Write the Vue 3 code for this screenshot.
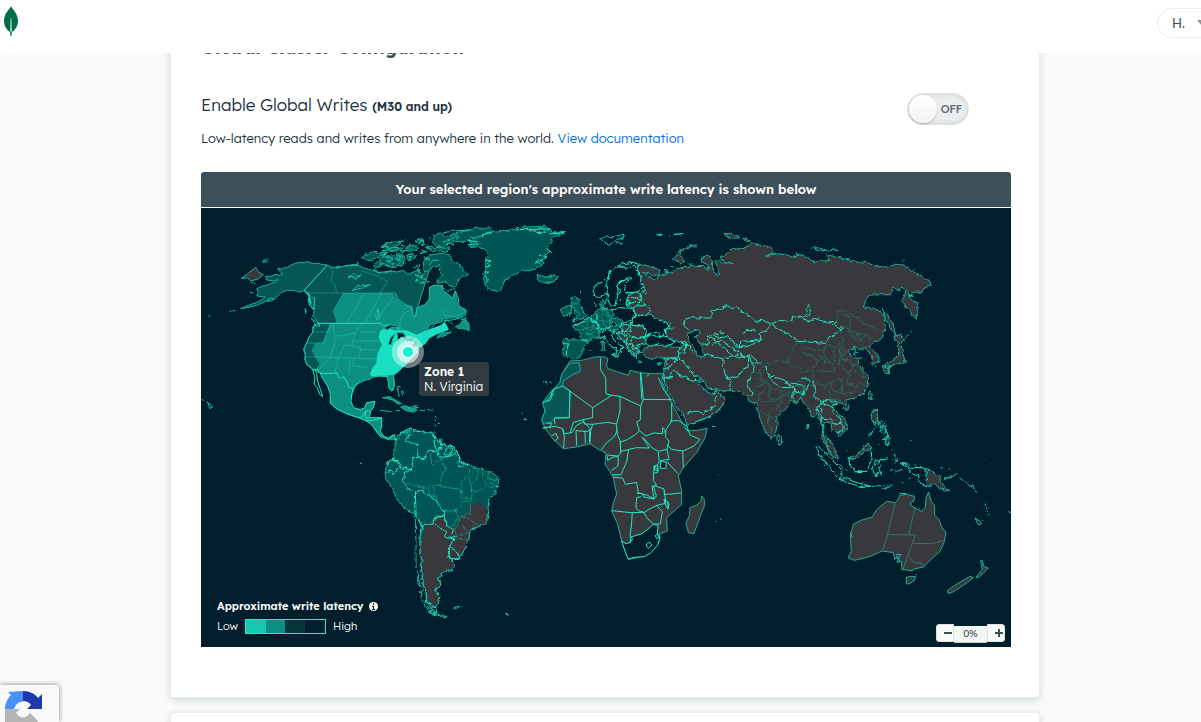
<script setup>
import { ref } from 'vue'

const globalWrites = ref(false)
const zoom = ref(0)
const latencySteps = ['near', 'mid', 'far', 'farthest']
</script>

<template>
  <div class="page">
    <header class="topbar">
      <a href="#" class="logo" aria-label="Home">
        <svg width="16" height="32" viewBox="0 0 16 32">
          <path d="M8 1C9 4 15 8 15 16C15 21 12 25 9 27L8.500 31H7.500L7 27C4 25 1 21 1 16C1 8 7 4 8 1Z" fill="#006c49" />
          <path d="M7.500 13H8.500L9 26L8 28L7 26Z" fill="#a5cbb9" />
        </svg>
      </a>
      <button class="account" type="button">H. <span class="caret"></span></button>
    </header>

    <main class="content">
      <section class="card">
        <h2 class="title">Global Cluster Configuration</h2>
        <div class="setting">
          <div>
            <h3 class="subtitle">Enable Global Writes <b>(M30 and up)</b></h3>
            <p class="lead">Low-latency reads and writes from anywhere in the world. <a href="#">View documentation</a></p>
          </div>
          <label class="switch">
            <input v-model="globalWrites" type="checkbox" aria-label="Enable Global Writes" />
            <span>{{ globalWrites ? 'ON' : 'OFF' }}</span>
          </label>
        </div>

        <div class="banner">Your selected region's approximate write latency is shown below</div>
        <div class="map">
          <svg class="world" viewBox="0 0 810 439" role="img" aria-label="World latency map">
            <defs>
              <filter id="coast" filterUnits="userSpaceOnUse" x="-500" y="-100" width="1700" height="1200">
                <feTurbulence type="fractalNoise" baseFrequency="0.07" numOctaves="2" seed="4" />
                <feDisplacementMap in="SourceGraphic" scale="13" xChannelSelector="R" yChannelSelector="G" />
              </filter>
            </defs>
            <!-- North America -->
            <g transform="translate(-1 13) scale(.33333)">
              <path class="t" d="M382 132 365 130 355 127 340 128 320 121 312 125 298 124 275 131 262 139 250 141 246 145 233 142 240 152 248 158 237 163 228 160 212 166 197 166 200 177 222 180 235 175 226 184 212 187 205 191 185 196 170 203 175 215 170 225 195 228 185 236 168 245 140 255 122 263 150 258 170 253 200 240 215 240 230 228 238 220 245 214 262 208 280 208 300 214 312 208 316 213 325 222 332 250 342 265 342 275 338 285 349 297 355 308 347 311 338 317 340 330 327 350 320 367 311 385 316 400 315 415 320 430 335 440 338 446 358 447 640 300 690 140 648 183 660 145 624 160 610 148 590 153 575 150 560 155 540 155 520 149 505 145 490 140 480 135 465 130 450 132 430 136 410 139 395 139Z" />
              <path class="mplain" d="M430 216 580 216 582 225 595 238 610 250 635 257 640 285 650 285 652 260 675 250 690 230 688 198 705 192 725 195 730 210 745 220 758 232 765 208 772 230 775 255 798 265 795 280 780 290 735 295 710 305 690 315 680 340 570 460 540 465 500 475 480 485 465 500 458 520 452 540 460 560 480 565 495 560 500 545 525 540 520 560 512 571 508 590 545 590 545 615 540 630 548 643 565 648 580 640 588 658 565 658 545 650 530 635 515 610 490 598 470 590 440 580 410 565 390 545 392 520 385 500 370 475 360 455 345 450 358 430 335 390 345 367 368 365 390 310 412 305 400 270Z" />
              <path class="b" d="M542 330 560 322 586 330 620 330 650 343 680 330 722 315 734 305 745 325 710 338 685 350 675 368 655 381 650 398 632 412 620 429 602 444 590 456 580 461 565 467 540 465 515 464 512 460 520 440 530 428 535 395 548 372 538 350Z" />
              <path class="m" d="M560 465 567 464 580 461 582 476 583 493 580 506 575 510 567 502 565 480Z" />
              <path class="n" d="M382 132 311 210M312 208 328 220 332 250M353 307 540 307 550 315 570 311 588 318 602 331M338 446 354 447 355 454 371 458 398 457 410 455 415 468 422 473 431 467 440 480 447 500 460 502M345 449 350 455 352 477 361 505 368 527 359 520 352 500 342 490 345 470 338 446M460 502 455 520 453 542 461 560 481 566 494 560 500 545 525 541 520 560 512 571 508 590 545 590 545 615 541 632 553 648 565 655 583 640 588 658M360 455 368 473 383 495 391 520 391 547 408 562 431 574 460 585 480 591 500 600 516 612 532 635 546 652M484 590 498 570 510 570M496 571 498 592 508 590M500 600 517 598 545 592M640 360 661 342 680 330 722 315 738 300M594 420 612 413 634 408" />
              <path class="o" d="M353 307 340 318 338 334 326 350 319 367 311 385 316 402 315 416 321 431 338 446M460 502 465 492 480 484 500 476 511 475 520 468 540 463 560 465 565 481 567 502 576 509 583 493 580 463 598 447 620 428 633 411 650 398 655 382 674 369 690 350 708 340 745 326M585 215 594 235 620 253 636 258 638 282 648 287 651 260 674 251 688 238 688 199 705 192 725 195 731 210 745 220 758 232 766 209 775 232 777 255 799 268 796 283 780 291 755 297 733 299 705 308 690 327 665 343" />
              <path class="f" d="M318 216H586M430 216 400 270 412 305M493 217 440 305M545 217 495 305M587 220 538 285 539 307M390 137 400 155 392 178 405 190 410 216M484 150 530 164 563 181 540 216M340 334 385 332 397 310M320 367 370 366 390 310M400 310 402 340 423 345M423 345 465 336 487 307M465 336 458 360 539 359M410 344 390 410 358 447M433 373 415 410 404 456M320 407 545 414M434 372 482 380 478 409M458 360 455 374M480 333 530 334M478 385 530 387M460 411 458 435 500 440M450 412 447 457M635 345 596 316 610 280 638 262M725 264 735 285 760 286 781 282 798 268M538 420 582 428M545 430 546 463M563 430 566 461M586 412 603 430M553 385 569 405M594 362 602 400M600 390 632 380" />
              <path class="w" d="M550 322 570 311 590 314 604 329 596 320 576 318 563 326ZM565 370 572 350 587 337 578 354 574 371ZM591 334 610 336 622 353 604 348 594 359ZM620 361 640 350 632 359ZM625 379 648 365 650 377Z" />
              <g filter="url(#coast)">
                <path class="t" d="M487 108 510 94 545 96 552 104 526 111 508 119 494 115ZM519 134 540 115 555 107 580 103 593 110 617 107 608 131 570 138 553 129 525 142ZM541 78 570 68 586 73 569 82ZM550 90 574 80 605 80 603 88 568 92Z" />
                <path class="o" d="M516 152 526 148 545 154 570 150 578 158M410 142 430 134 450 135 475 128 470 138M445 171 459 159 473 166 484 158 469 173 460 168ZM455 207 474 196 513 191 484 202 462 208ZM527 282 534 265 538 282 531 298ZM321 217 344 232 342 267 328 253ZM325 235 335 245 330 250ZM331 291 350 303 360 315 347 316ZM315 263 322 270 318 281ZM188 119 199 116 204 122 190 124ZM200 236 215 232 226 234M150 213 161 217M152 185 162 185 169 189" />
              </g>
              <path class="o" d="M88 273 94 270M98 270 107 268M25 284 31 286M6 535 11 539M20 542 31 550 37 559 29 562 24 547" />
              <path class="g" d="M123 173 140 161 167 139 174 152 190 161 176 173 153 180 143 170Z" />
              <path class="m" d="M547 530 570 527 590 540 603 547 595 550 576 536ZM602 558 616 554 630 560 651 567 641 574 618 569ZM588 568 600 570M682 565 692 568M590 498 594 510 598 528M604 511 608 524M540 568 575 572" />
            </g>
            <!-- Arctic islands and Greenland -->
            <g transform="translate(179 3) scale(.33333)" filter="url(#coast)">
              <path class="t" d="M130 150 150 132 190 127 210 136 220 151 239 160 247 175 265 188 248 201 237 199 232 214 220 229 199 215 169 213 187 192 175 177 180 161 158 167 148 181 133 180ZM105 207 120 198 149 211 138 216ZM0 140 20 135 42 140 50 148 60 145 61 155 49 166 30 166 12 158 0 160ZM77 134 91 128 108 132 103 144 86 149ZM49 128 67 127 65 146 53 151ZM159 92 164 71 185 65 192 78 237 64 285 52 332 51 339 59 319 68 290 78 263 82 255 91 222 92 188 108 174 107ZM137 109 165 109 207 112 200 122 154 119ZM10 101 36 92 74 90 55 102 30 109ZM75 112 101 102 115 110 108 119ZM106 89 127 82 132 91 113 96Z" />
              <path class="t" d="M260 91 286 83 315 73 330 65 350 60 383 58 415 49 459 47 493 46 512 55 516 66 538 63 556 65 530 74 514 86 517 94 503 104 506 114 510 124 493 132 499 140 483 147 493 155 474 168 452 178 424 180 406 190 391 200 376 204 367 223 351 244 337 237 322 235 313 217 309 187 318 172 316 148 324 135 316 114 280 106 265 105 276 94Z" />
              <path class="n" d="M405 56 510 54M451 59 499 64M259 91 294 89M263 103 298 97M334 65 303 71M479 132 495 137 482 153 462 157 479 144M315 145 332 149 321 157 333 165 315 169M309 183 326 183 314 194 326 207 315 217M506 69 552 66M500 114 516 123" />
              <path class="o" d="M0 110 14 104 28 108M4 118 23 121M43 109 62 113M63 107 72 105M89 98 98 103M115 86 130 89M123 103 135 96M145 78 151 85M188 94 235 71M189 66 225 60 271 57M209 85 238 80M198 101 225 98M25 139 39 145 20 151 43 158M80 139 94 136 88 146M70 150 76 159M0 125 20 128 7 134M52 135 62 134 58 145M105 190 118 190 125 204M121 212 133 218M186 225 203 239 226 233M100 170 118 160 112 180 130 190 108 196M130 140 150 145 140 155M62 122 80 118 95 121M20 112 38 118 50 116M120 128 140 122 128 118M145 165 160 150 175 146 190 150" />
              <path class="t" d="M473 193 485 196 489 202 506 196 526 193 533 202 520 212 498 217 485 209 473 205Z" />
              <path class="m" d="M226 347 244 339 248 321 258 320 256 333 266 336 268 355 246 354ZM169 382 179 370 214 359 203 371 184 376ZM195 324 220 340 209 331Z" />
              <path class="o" d="M491 511 498 513 504 517M511 513 513 515M112 585 100 590M51 525 62 529M53 535 60 541M68 540 72 548" />
            </g>
            <!-- South America -->
            <g transform="translate(159 193) scale(.33333)" filter="url(#coast)">
              <path class="t" d="M105 120 118 111 124 97 142 90 150 80 157 91 174 90 191 93 211 98 223 95 226 111 239 117 246 129 276 135 291 150 299 168 305 188 326 189 345 201 368 205 388 211 410 225 416 243 409 268 396 288 386 292 387 334 377 367 350 379 329 394 326 420 311 451 295 475 272 475 281 493 272 509 248 512 246 527 233 529 240 551 226 570 240 585 233 613 214 619 200 607 186 593 188 565 176 535 178 516 169 498 168 420 165 338 143 327 120 308 104 279 83 240 75 221 80 190 98 170 105 145Z" />
              <path class="gplain" d="M190 372 222 370 225 350 240 343 253 348 259 369 286 384 302 346 327 338 328 315 350 303 381 319 385 345 373 370 350 379 329 394 326 420 311 451 295 475 272 475 281 493 272 509 248 512 246 527 233 529 240 551 226 570 240 585 233 613 214 619 200 600 187 550 185 480 179 430 190 400Z" />
              <path class="w plain" d="M170 345 183 380 178 420 180 478 187 550 198 600 186 590 188 565 178 535 170 498Z" />
              <path class="o" d="M386 292 387 334 377 367 350 379 329 394 326 420 311 451 295 475 272 475 281 493 272 509 248 512 246 527 233 529 240 551 226 570 240 585 233 613 214 619" />
              <path class="n" d="M103 119 123 96 150 80 172 91 217 94 229 112 246 131 276 136 292 153 304 186 313 186 324 191M138 94 143 105 138 120 176 132 173 165 180 174 196 171 204 147 230 150M224 99 224 136 242 169 266 166 290 162M242 113 246 140 234 147 233 164M267 137 255 147 251 160 270 163 277 149 271 139M289 151 278 164M95 172 117 184 122 202 154 202 159 181 158 169 174 170M78 190 92 176 115 184M78 216 93 210 99 221 118 199 128 204 157 202 133 220 130 242 144 263 166 271 168 336 184 376 190 371 222 369M166 276 188 264 201 281 229 298 243 322 255 327 252 347 229 345 222 367 240 381 256 391 258 411 281 412 289 402M189 371 180 408 180 460 187 478 184 502 190 555 200 584 200 603 228 620 237 641 208 636M253 348 259 371 280 384 275 401M271 411 285 416 266 438 266 463 271 475M269 438 292 453 299 469M268 439 268 461 272 474 297 473" />
              <path class="f" d="M128 244 204 263 210 250 243 255 302 266 302 291 335 292 331 300 302 303M211 155 215 189 235 183 239 174M241 170 257 200 243 230 245 256M204 264 210 282 230 285 232 300M219 257 222 287M253 331 291 328M288 330 296 346 277 378M302 303 302 317 286 328M318 225 306 248 302 288M331 205 325 223 335 265 332 293M330 228 356 207M356 209 350 233 333 252M369 210 366 232 385 257 415 257M386 212 383 235 405 236M330 271 356 270 382 256M390 231 412 239M389 244 407 253M333 307 330 337 303 347 334 354 341 366 365 376M306 375 323 397 291 402M281 410 325 416M303 347 283 386 290 405" />
              <path class="o" d="M173 510 174 545 183 552M173 538 184 545M178 535 187 534M177 575 186 572 182 589M185 598 195 615 210 631M200 615 216 626 210 632 228 636 221 641 245 645 262 646 240 649M205 628 233 628M237 537 243 544M281 621 289 617 301 618 291 622ZM435 639 446 643M486 36 488 38M490 54 500 56M0 187 9 187M214 28 217 30M219 36 222 40M226 45 228 51M225 56 229 62M225 70 228 76M219 80 221 82M233 70 239 70M108 29 119 28M179 28 195 28M144 21 157 17 174 22 155 28ZM110 0 133 13M139 92 148 90 151 105 142 106ZM290 188 300 181 314 186 307 199 294 195" />
            </g>
            <!-- Russia and Asia -->
            <g transform="translate(459 13) scale(.33333)" filter="url(#coast)">
              <path class="g" d="M-60 130-41 134-17 141 0 150-5 163-28 160-50 154-32 169-22 172-14 182-5 165 13 160 20 158 43 149 62 140 90 139 87 128 104 136 129 137 149 146 142 130 126 123 130 103 148 109 158 121 158 141 164 158 179 160 176 140 164 121 178 116 184 126 219 127 189 119 180 108 200 99 210 86 237 83 265 75 275 65 300 73 326 76 345 95 320 103 355 98 406 107 409 99 440 105 453 118 470 122 511 118 500 101 530 108 560 115 600 125 618 121 645 137 680 137 710 130 745 139 775 160 800 178 818 193 795 200 787 213 760 214 744 215 755 234 771 245 775 267 768 295 747 269 725 242 735 222 737 207 723 196 715 210 702 198 694 203 693 221 625 222 610 258 640 262 655 268 672 286 676 320 665 355 645 360 630 375 640 390 658 405 655 425 640 430 634 405 614 379 597 386 588 395 585 380 570 388 571 405 605 411 590 421 608 444 625 465 626 490 611 516 590 530 560 540 555 550 535 544 519 558 536 580 554 594 562 618 550 636 536 650 530 633 515 628 514 610 499 606 489 611 491 640 508 655 521 673 528 710 510 700 499 675 485 650 489 625 480 600 473 577 455 588 445 562 429 544 423 528 412 546 395 540 380 560 350 590 353 621 345 645 333 655 310 620 295 575 290 543 275 548 265 530 245 512 215 508 180 510 161 503 144 502 129 478 111 465 104 473 125 495 137 510 160 522 168 505 174 519 195 530 190 550 168 575 140 590 80 613 75 590 45 550 15 490 9 464 15 440 12 410 0 410-33 413-52 398-50 382-19 373 20 373 60 380 80 372 60 364 30 355 19 346 22 331 28 308 6 303-24 295-35 280-35 255-63 245-61 220-46 210-50 190-64 165-72 146Z" />
              <path class="w" d="M90 331 115 327 118 337 105 352 111 360 122 364 123 380 131 391 134 407 123 411 108 404 104 381 88 359 81 342ZM583 375 597 385 593 397 580 400 587 389Z" />
              <path class="n" d="M70 305 76 295 96 286 112 291 154 291 153 267 180 264 203 254 215 263 231 257 239 268 268 285 285 301 307 298 334 307 361 298 395 302 398 284 429 291 443 300 473 294 500 303 531 302 520 311 550 322 518 343 497 367 457 364 414 361 382 338 350 321 334 308 317 331 300 335 303 357 250 360 235 374 202 347 178 351 155 343 142 345 145 370 125 369M70 305 74 317 86 326M250 339 258 329 286 327M158 345 165 336 176 342M143 343 192 379 219 404 237 401M157 370 182 359 230 391M225 375 261 378 302 359M237 382 233 392 252 407 270 401 293 421M129 404 143 398 188 414 190 442 198 467 213 478 207 508M188 414 219 404 236 410 266 406 279 426 303 425M197 472 233 468 250 447 264 437 267 406M276 427 282 449 271 470 261 495 277 518 266 524M77 380 71 395 54 397M60 379 55 408 68 423 99 457 108 469M62 364 75 361 101 397M12 412 45 410 52 408M9 447 23 440 20 415M22 415 52 412 27 440 19 448M36 445 67 466 101 478M13 470 37 466 21 476 35 453M82 576 113 570 128 579 146 567 163 554 167 526M100 478 129 481M163 529 171 526M330 470 339 463 387 488 394 500 364 499 336 482ZM304 439 319 433 320 450 330 469M394 489 402 487 433 494 430 518 405 513 395 490 M402 499 398 530 409 542M423 528 437 511 448 486 457 480 468 510 461 524 487 546 469 560 484 583 484 604 494 624M487 539 492 548 524 562 517 573 543 594 542 607 531 611 520 607 517 595 487 591 487 575 476 556M509 536 521 551 530 549M541 605 549 614 549 627 531 636M487 546 509 533 531 544M72 367 88 374 91 386M420 472 438 472 450 479" />
              <path class="o" d="M430 288 442 274 445 250 453 265 448 283 437 287M180 332 188 332 187 338 181 337ZM84 612 109 602 144 590 171 573 191 548M157 516 164 518 160 524" />
              <path class="f2" d="M528 302 535 290 528 275 545 268 570 280 600 295 610 307 639 318 646 332M546 278 575 290 569 312 573 330 593 340 621 342 634 360M545 323 565 322 569 341 595 360 614 350M593 340 598 352 610 362M404 362 426 369 427 378 474 389 495 380 500 370 523 380 551 363 541 331M383 421 386 405 400 390 400 376 416 363M383 421 348 419 319 432M383 420 397 437 413 437 428 453 449 447 465 435 474 420 461 404 426 397M458 447 456 461 465 483 496 500 514 484 534 474M475 448 501 452 522 449 525 436 492 421 475 398M492 380 492 405 510 425M521 384 523 424 512 432M540 379 543 401 534 436M549 370 549 399 544 415 570 417M564 391 549 405M568 417 578 431 594 430M543 435 566 459 584 430M594 430 613 463M584 450 611 472 620 465M566 459 562 486 585 499 600 486 618 495M510 484 518 509 542 515 547 488 536 468M549 490 579 488M500 500 512 515 510 535 543 541M542 515 568 517 589 505M300 445 303 471 318 491M280 450 303 454M289 469 318 481 300 495 270 509M318 482 335 502 362 511 390 507M325 500 299 517 295 542M332 494 326 529 347 538 390 512M303 542 346 540 365 517 362 550 342 566 327 575 321 607M300 572 325 586 350 590M325 586 326 610 337 624 333 651M350 550 360 570M375 519 390 529 400 512M406 480 425 481M413 500 437 492 422 519M612 382 636 374M633 404 652 406" />
              <path class="g" d="M40 113 55 92 76 79 108 71 106 78 79 83 66 91 59 107 78 121 62 126 44 118ZM195 38 215 37 240 50 230 52 198 47ZM249 51 271 60 257 62ZM458 81 474 80 501 88 475 90ZM503 88 532 88ZM350 650 355 640 365 653 364 668 354 671ZM556 553 566 552 565 563 556 568 549 562ZM625 519 631 507 637 519 633 536 626 531ZM666 265 682 279 696 301 713 346 693 324 677 291ZM702 346 717 343 736 352 720 368 706 361ZM716 370 728 379 730 403 736 425 703 429 683 443 672 438 680 426 697 416 716 405 715 390ZM667 437 687 434 685 459 674 455ZM682 440 696 437 689 445ZM637 573 648 565 653 575 649 594 657 604 675 614 672 622 650 607 637 592Z" />
              <path class="o" d="M0 41 8 41M28 43 34 44M42 40 70 37M12 145 23 146 23 155 13 153M33 135 43 138M727 120 731 121M739 346 745 341M751 334 756 332M750 223 760 227M645 438 649 440M441 610 447 611 445 622 441 622ZM157 616 164 617M751 658 753 659" />
            </g>
            <!-- Europe -->
            <g transform="translate(319 13) scale(.33333)" filter="url(#coast)">
              <path class="w o2" d="M355 130 342 124 315 127 291 136 273 149 267 165 252 181 237 188 219 197 221 224 237 231 260 218 264 237 271 253 283 252 288 241 294 224 302 211 291 197 301 184 322 171 333 172 316 187 314 209 328 216 359 211 372 197 362 182 363 164 350 148ZM335 295 318 306 302 301 279 290 275 268 300 260 338 262 342 279ZM340 290 352 284 385 279 400 287 419 298 446 306 445 318 430 328 438 337 421 348 412 338 398 334 378 349 374 336 355 320 340 313 332 311ZM230 338 248 334 259 326 283 331 273 341 282 358 297 370 313 382 302 383 301 395 292 402 276 403 291 393 285 381 266 369 255 349 239 349ZM378 349 385 342 400 343 413 348 430 344 450 353 466 366 440 374 414 369 391 376 379 370Z" />
              <path class="g" d="M303 308 329 313 345 314 370 315 379 328 375 350 376 370 360 376 352 385 358 398 348 400 351 412 334 397 320 381 318 363 300 348 288 333 300 331 311 333ZM323 220 350 216 361 219 363 240 380 254 390 270 383 280 350 284 340 262 318 251 332 245 321 236Z" />
              <path class="t" d="M130 355 156 357 184 357 203 364 190 378 187 395 177 412 156 414 145 409 130 406 128 382 132 373ZM158 312 174 313 180 305 200 301 206 291 230 303 237 312 232 326 238 344 220 355 204 357 185 355 179 332 159 319ZM229 272 250 263 279 267 282 284 267 296 276 310 265 320 241 320 230 308ZM152 232 163 226 178 235 176 249 187 263 201 282 193 292 170 297 158 300 173 284 159 276 166 261 151 249ZM124 265 140 255 156 256 153 275 138 287 126 282ZM238 246 250 235 258 244 251 258 264 264 245 266ZM51 164 65 165 83 170 103 161 113 171 101 181 78 186 65 182 53 173ZM217 281 228 272 233 285 231 301 211 292ZM269 297 293 290 306 300 297 309 278 306ZM267 319 297 312 299 323 276 331Z" />
              <path class="n" d="M293 224 289 193 304 180 326 173M288 136 322 142 344 132 355 155 363 169M273 149 258 193 263 217 261 240M129 367 145 369 146 380 140 385 139 405M159 312 177 309 206 291 226 305 238 312M187 355 206 362M210 291 214 302 231 305M230 321 258 324 269 319M235 331 246 323 250 332M303 308 329 313 334 329 311 333 300 322ZM315 333 331 313 370 315 379 328 375 350 345 352 323 339M334 347 361 352 378 352M335 352 330 370 346 374 373 366M288 333 304 337 325 350 313 365 291 348M318 352 326 371 320 381 334 397 351 412M341 374 338 385 356 382 352 398M321 214 350 216M320 232 330 227 361 235M318 249 344 244 360 248M321 236 332 247 322 257M340 260 349 255 380 254M338 262 350 284 383 280M323 220 318 251M361 219 358 247M320 379 318 363 307 357M305 331 315 338M442 322 460 321M480 365 503 373 488 389M495 378 503 363" />
              <path class="f" d="M205 300 197 327 211 353M185 314 211 328 234 321M183 326 220 316 237 327M194 333 223 343 211 353M221 305 215 330M249 267 247 304 263 320M235 283 275 285M231 298 266 300M257 268 270 290M184 336 207 341 225 333M150 243 174 248 157 251M166 263 180 283" />
              <path class="o" d="M241 53 253 49 277 47 302 43 316 45 296 55 284 61 267 73 252 64ZM285 65 306 67M409 42 427 40M449 43 453 46M461 41 490 38M180 211 183 213M240 259 252 259 244 249M223 244 227 258M246 364 252 364 253 390 247 391ZM252 345 249 353 256 355M274 402 295 403 293 411ZM204 387 213 388M351 423 370 425M412 427 424 424 418 430ZM298 237 303 240 300 243M370 209 378 207 382 212 373 216ZM328 387 350 401 342 410 333 395M345 391 365 391M345 382 359 376" />
            </g>
            <!-- Africa -->
            <g transform="translate(319 133) scale(.33333)">
              <path class="g" d="M150 60 185 58 225 48 250 47 264 53 260 71 262 82 290 92 325 103 330 88 360 95 390 98 430 98 425 119 440 155 455 185 470 215 490 250 502 270 530 268 562 262 555 290 530 335 490 380 475 405 485 450 485 490 440 530 442 570 420 578 418 602 400 625 375 645 325 655 315 630 305 600 293 550 275 510 280 485 290 460 280 410 275 400 255 370 258 335 235 325 210 308 170 318 130 323 100 295 75 262 65 235 75 210 68 185 95 150 120 125 125 100Z" />
              <path class="t" d="M150 67 178 65 182 90 155 103 130 120 128 135 150 150 148 230 105 232 90 246 68 246 66 232 76 211 68 185 84 163 120 124 125 100Z" />
              <path class="w o2" d="M305 600 318 608 330 605 333 588 366 578 381 567 400 550 414 553 412 580 420 590 413 612 393 635 373 647 342 649 325 655 315 630ZM422 361 439 364 438 382 421 382Z" />
              <path class="n" d="M128 135 218 200 275 163 258 158 257 110 241 85 242 50M128 135 100 145 100 155 90 178 68 184M150 149 148 230 104 231M218 200 218 230 190 236 160 244 150 276M300 165 300 210 290 249 262 244 218 250 212 270 210 308M275 163 300 166 362 195 370 175 363 95M368 175 455 176M362 195 361 237 350 243 358 269 346 281 322 296 302 303 292 280 289 250M358 269 378 285 400 276 427 278 428 260 438 270 436 287 447 300 441 325 415 331 397 321 370 290M455 185 455 240 432 275M450 240 477 239 501 256 510 282 540 295 522 315 490 330 455 325 441 311M441 325 447 355 418 359 414 371 402 376 400 419 410 432 396 436 402 474 383 463 355 456 350 424 316 430 308 411 279 409M275 402 303 401 320 362 326 325 350 320 388 321 366 288M301 303 302 338 294 345 261 342M261 343 263 358 280 348 295 347 294 375 274 389M326 326 302 331 301 301M440 361 474 398M488 329 490 380M401 433 432 444 433 461 483 456M350 458 367 457 371 468 402 474 409 465 400 435M433 447 437 487 411 493 389 504 373 514 355 509 348 501 350 470 363 467M276 509 333 515 372 514 380 530 400 549 421 549 427 512 409 493M337 515 334 555 330 587 338 593 330 606M439 478 447 489 444 505M97 148 93 165 80 180M81 247 94 246 91 259 70 259M68 262 103 256 127 262 133 286 131 321M105 250 103 233M128 262 132 278 156 275 170 253 190 242 211 263 203 272 168 269 170 314M195 269 196 307M209 266 208 303M95 285 108 277 114 292 104 300M190 235 193 249 219 250M292 266 284 286 259 306 244 326M400 375 414 385 413 395 401 396M415 333 417 356M361 95 365 174M380 106 387 101M415 110 432 148 453 175M432 100 433 122M496 260 503 269" />
              <path class="o2" d="M378 612 388 603 396 612 385 622ZM406 584 413 579 418 589 410 593ZM405 373 414 375 414 389 403 386ZM432 474 443 482 444 503 435 488Z" />
              <path class="g" d="M545 465 553 475 553 495 543 520 532 550 522 578 505 575 498 545 509 524 510 500 531 492 543 481Z" />
              <path class="o" d="M69 122 73 123M78 125 82 126M90 121 93 125M5 216 8 217M12 236 19 236M576 256 584 257M594 401 596 402M586 541 589 542M600 533 604 535M249 331 255 334" />
            </g>
            <!-- Oceania -->
            <g transform="translate(579 173) scale(.33333)">
              <path class="g" d="M345 365 355 355 359 343 379 340 404 346 402 360 391 365 394 374 415 387 426 391 436 378 438 350 446 333 454 362 464 374 464 402 477 416 485 438 498 455 492 485 480 511 460 529 430 558 402 564 397 570 366 565 364 541 351 544 359 526 344 535 340 515 307 510 280 522 254 531 223 538 204 530 214 511 211 463 220 430 243 418 277 408 290 386 320 361ZM379 588 407 586 403 599 387 609 379 608ZM502 629 524 613 570 586 580 590 563 604 519 633 505 638ZM588 589 607 565 602 539 606 537 612 557 625 561 611 576 594 590Z" />
              <path class="f" d="M345 367 323 461 308 508M323 461 406 462 369 565M405 379 387 460M400 487 455 488 490 480M388 529 403 545 426 548 431 557" />
              <g filter="url(#coast)">
                <path class="w o2" d="M105 197 115 195 134 214 151 230 160 241 181 262 187 283 177 293 164 281 151 260 130 234ZM207 231 219 235 238 222 253 203 264 189 273 208 276 235 268 249 262 271 225 272 209 252ZM176 294 202 294 231 305 273 316 239 316 204 306ZM361 247 382 252 389 263 409 259 438 262 440 318 417 305 416 281 393 276 379 257Z" />
                <path class="g" d="M132 163 147 181 161 197 175 234 156 223 140 190ZM207 232 237 215 250 204 263 184 278 203 257 206 240 226 222 235ZM439 264 460 273 477 284 483 302 506 330 480 324 463 307 440 319ZM277 88 291 85 294 106 284 134 277 120ZM312 172 325 165 330 180 322 192 314 184Z" />
                <path class="o" d="M294 124 308 123 319 132 315 148 322 150 323 165 330 180 325 192 314 184 322 172 306 176M298 138 312 139 299 151 311 159M281 127 290 139M295 129 308 153M320 144 313 161M267 167 279 148M286 240 303 237 321 234 297 242 290 248 307 253 295 261 306 284 294 270 287 288 280 258 287 235M343 221 350 238 344 248M341 236 350 241M331 270 344 268M346 270 367 269M360 246 389 250 376 257M286 315 313 314M306 326 325 316 338 313M312 324 331 320M178 250 185 256 180 265M492 291 515 291 528 277 516 285 499 294Z" />
              </g>
              <path class="o" d="M281 141 284 145M365 303 370 307M386 295 392 290M275 316 284 316M113 219 117 225M122 233 126 238M132 251 135 255M187 266 190 269M197 266 202 268M199 208 202 210M295 189 297 192M335 205 338 208M481 260 488 261M506 263 510 264M539 290 551 300M556 301 561 306M562 309 574 318 578 311 583 325M584 330 591 333M615 368 618 375M619 379 622 384M620 389 623 393M624 400 628 402M585 411 600 421 604 429 595 431ZM607 417 609 420M685 392 693 395M390 178 392 179M631 246 632 247M407 579 410 582M416 381 419 383M348 521 366 521M349 526 359 540M358 337 379 338M211 454 217 469M129 134 129 166M82 130 85 142M404 250 409 256" />
            </g>
          </svg>

          <span class="marker"></span>
          <div class="tip"><b>Zone 1</b><span>N. Virginia</span></div>
          <div class="legend">
            <div class="legend-title">Approximate write latency
              <svg width="9" height="9" viewBox="0 0 9 9"><circle cx="4.500" cy="4.500" r="4.500" fill="#fff" /><path d="M4 1H5V3H4ZM3 4H5V7H6V8H3V7H4V5H3Z" fill="#001e2b" /></svg>
            </div>
            <div class="scale">Low <span class="steps"><i v-for="s in latencySteps" :key="s" :class="s"></i></span> High</div>
          </div>
          <div class="zoom">
            <button type="button" aria-label="Zoom out" @click="zoom = Math.max(0, zoom - 10)"><svg width="8" height="8" viewBox="0 0 8 8"><path d="M0 4H8" /></svg></button>
            <output>{{ zoom }}%</output>
            <button type="button" aria-label="Zoom in" @click="zoom += 10"><svg width="8" height="8" viewBox="0 0 8 8"><path d="M0 4H8M4 0V8" /></svg></button>
          </div>
        </div>
      </section>
      <section class="card next"></section>
    </main>

    <aside class="captcha" aria-label="reCAPTCHA">
      <svg width="40" height="40" viewBox="0 0 40 40">
        <path d="M19 2V13C15 12 12 15 10 20H1C1 14 4 9 7 6L4 3Z" fill="#4a90f5" />
        <path d="M19 2C26 2 31 5 34 9L38 5V20H23L27 16C25 13 22 12 19 12Z" fill="#1c3aa9" />
        <path d="M1 20H16L12 24C16 30 22 30 26 24L34 32C25 42 10 39 6 34L1 38Z" fill="#b5b5b5" />
      </svg>
    </aside>
  </div>
</template>

<style>
body { background: #f9fbfa; }
</style>

<style scoped>
.page { height: 100vh; overflow: hidden; font: 300 13px/20px Lexend, "Lato", sans-serif; color: #21313c; }
.page * { box-sizing: border-box; }
.topbar { position: fixed; z-index: 5; top: 0; left: 0; right: 0; height: 53px; background: #fff; display: flex; justify-content: space-between; align-items: flex-start; }
.logo { margin: 5px 0 0 3px; display: block; }
.logo svg { display: block; }
.account { margin: 8px -16px 0 0; width: 60px; height: 30px; border: 1px solid #e7eeec; border-radius: 15px; background: #fff; color: #3d4f58; font: 13px "Lato", sans-serif; padding: 0 0 0 14px; display: flex; align-items: center; gap: 12px; }
.caret { border: 5px solid transparent; border-top: 6px solid #89979b; border-bottom: 0; }
.content { padding: 0 162px 0 171px; display: flex; flex-direction: column; gap: 16px; }
.card { flex: none; background: #fff; border-radius: 3px; padding: 36px 28px 50px 30px; box-shadow: 0 0 1px 1px #e7eeec, 0 2px 8px rgba(6, 22, 33, .2); }
.title { margin: 0 0 32px; font-size: 18px; line-height: 24px; color: #3d4f58; font-weight: 700; }
.setting { display: flex; justify-content: space-between; padding-right: 42px; margin-bottom: 24px; }
.subtitle { margin: 0 0 8px; font-size: 17px; line-height: 26px; font-weight: 300; }
.subtitle b { font-size: 12px; font-weight: 600; }
.lead { margin: 0; font-size: 13px; line-height: 20px; }
.lead a { color: #0070e0; text-decoration: none; }
.switch { position: relative; display: block; margin-top: 1px; width: 62px; height: 32px; }
.switch input { appearance: none; display: block; margin: 0; width: 62px; height: 32px; border-radius: 16px; background: #ebedee; border: 1px solid #dee1e1; box-shadow: inset 0 0 5px rgba(0, 0, 0, .14); }
.switch input::before { content: ""; display: block; width: 28px; height: 28px; margin: 1px; border-radius: 50%; background: linear-gradient(#fff, #f4f4f4); box-shadow: 0 1px 2px rgba(0, 0, 0, .25); }
.switch input:checked::before { margin-left: 31px; }
.switch span { position: absolute; right: 7px; top: 6px; font-family: "Lato", sans-serif; font-size: 11px; font-weight: 700; color: #5d6c74; pointer-events: none; }
.banner { background: #3d4f58; color: #fff; text-align: center; font-weight: 600; font-size: 13px; height: 36px; line-height: 35px; border-bottom: 1px solid #fff; border-radius: 3px 3px 0 0; }
.map { position: relative; background: #001e2b; color: #fff; overflow: hidden; }
.world { display: block; width: 100%; height: auto; }
.world path { stroke-width: 3px; stroke-linejoin: round; stroke: #1cae99; fill: none; }
.world .t { fill: #065655; }
.world .g { fill: #37393c; }
.world .m { fill: #0d9081; }
.world .b { fill: #18e0c1; stroke: #1bf0cf; }
.world .mplain { fill: #0d9081; stroke: none; }
.world .gplain { fill: #37393c; stroke: none; }
.world .w { fill: #001e2b; }
.world .plain { stroke: none; }
.world .o { stroke: #1bc6ab; }
.world .o2, .world .n { stroke: #1de9c6; }
.world .f { stroke: rgba(30, 220, 185, .38); }
.world .f2 { stroke: #24685f; }
.marker { position: absolute; left: 200px; top: 137px; width: 14px; height: 14px; border-radius: 50%; background: #12f4cf; border: 2px solid #e9fff9; box-shadow: 0 0 0 4px rgba(255, 255, 255, .58), 0 0 0 9px rgba(255, 255, 255, .42); }
.tip { position: absolute; left: 218px; top: 154px; display: flex; flex-direction: column; padding: 2px 5px; width: 70px; border-radius: 3px; background: rgba(51, 60, 66, .95); font-size: 12px; line-height: 15px; white-space: nowrap; }
.tip b { font-weight: 600; }
.legend { position: absolute; left: 16px; bottom: 11px; font-size: 11px; line-height: 20px; }
.legend-title { font-weight: 600; display: flex; align-items: center; gap: 6px; }
.scale { display: flex; align-items: center; gap: 7px; }
.steps { display: grid; grid-template-columns: repeat(4, 1fr); width: 81px; height: 15px; border: 1px solid #13f5d1; }
.near { background: #16c9ae; }
.mid { background: #0d9081; }
.far { background: #05363c; }
.farthest { background: #001e2b; }
.zoom { position: absolute; right: 6px; bottom: 4px; display: flex; align-items: flex-start; font-size: 10px; line-height: 16px; color: #21313c; }
.zoom button { width: 18px; height: 18px; padding: 0 1px 0 0; display: flex; align-items: center; justify-content: flex-end; background: #f9fbfa; border: 1px solid #dde4e2; border-radius: 3px 0 0 3px; }
.zoom button:last-child { border-radius: 0 3px 3px 0; }
.zoom button path { stroke: #3d4f58; stroke-width: 2px; }
.zoom output { width: 33px; height: 17px; margin-top: 2px; background: #f4f6f5; border-bottom: 1px solid #c4cccc; text-align: center; }
.next { height: 120px; }
.captcha { position: fixed; left: 0; bottom: 0; width: 59px; height: 37px; padding: 4px; background: #f9f9f9; border-radius: 0 3px 0 0; box-shadow: 0 0 5px #808080; overflow: hidden; }
</style>
